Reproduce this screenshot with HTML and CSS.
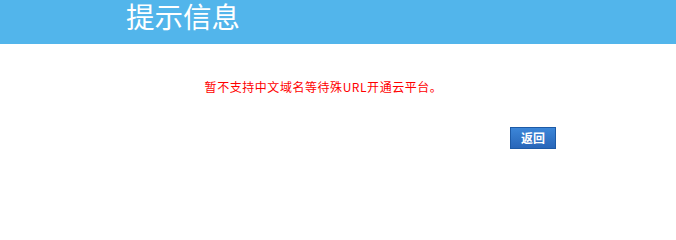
FILE: index.html
```html
<!DOCTYPE html>
<html lang="zh-CN">
<head>
<meta charset="utf-8">
<title>提示信息</title>
<link rel="stylesheet" href="styles.css">
</head>
<body>
<div class="header"><h1 class="title">提示信息</h1></div>
<div class="content">
  <p class="msg">暂不支持中文域名等待殊URL开通云平台。</p>
  <div class="actions"><button class="btn">返回</button></div>
</div>
</body>
</html>
```
FILE: styles.css
```css
html, body {
  margin: 0;
  padding: 0;
  background: #ffffff;
  font-family: "Noto Sans CJK SC", "Liberation Sans", sans-serif;
}
.header {
  height: 44px;
  background: #52b5eb;
  padding-left: 126px;
  box-sizing: border-box;
}
.title {
  margin: 0;
  font-size: 28.5px;
  line-height: 31px;
  font-weight: normal;
  color: #ffffff;
}
.content {
  display: flex;
  flex-direction: column;
}
.msg {
  margin: 35px 0 0 0;
  width: 647px;
  text-align: center;
  font-size: 12px;
  line-height: 16px;
  letter-spacing: 0.55px;
  color: #ff0000;
}
.actions {
  display: flex;
  padding-left: 510px;
  margin-top: 32px;
}
.btn {
  width: 46px;
  height: 22px;
  padding: 0;
  border: 1px solid #1d5aa6;
  background: linear-gradient(#3c86d8, #2866b9);
  color: #ffffff;
  font-family: "Noto Sans CJK SC", sans-serif;
  font-weight: bold;
  font-size: 12px;
  line-height: 20px;
}
```
